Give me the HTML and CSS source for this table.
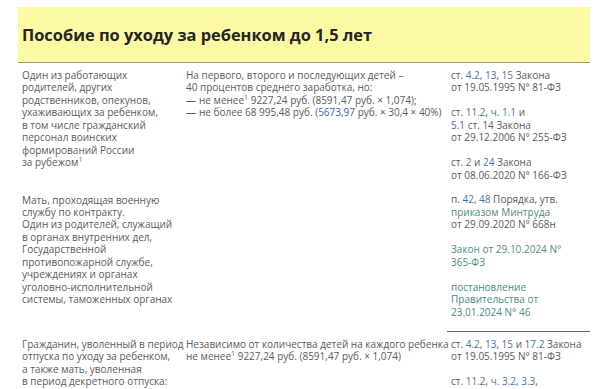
FILE: index.html
```html
<!DOCTYPE html>
<html lang="ru">
<head>
<meta charset="utf-8">
<link rel="stylesheet" href="styles.css">
</head>
<body>
<div class="table">
  <div class="head"><h1 class="title">Пособие по уходу за ребенком до 1,5 лет</h1></div>
  <div class="row row-first">
    <div class="cell c1">
      <p>Один из работающих<br>родителей, других<br>родственников, опекунов,<br>ухаживающих за ребенком,<br>в том числе гражданский<br>персонал воинских<br>формирований России<br>за рубежом<sup class="note">1</sup></p>
      <p class="gap2">Мать, проходящая военную<br>службу по контракту.<br>Один из родителей, служащий<br>в органах внутренних дел,<br>Государственной<br>противопожарной службе,<br>учреждениях и органах<br>уголовно-исполнительной<br>системы, таможенных органах</p>
    </div>
    <div class="cell c2">
      <p>На первого, второго и последующих детей –<br>40 процентов среднего заработка, но:</p>
      <p class="dash"><span class="d">—</span>не менее<sup class="note">1</sup> 9227,24 руб. (8591,47 руб. × 1,074);</p>
      <p class="dash"><span class="d">—</span>не более 68 995,48 руб. (<span class="blue">5673,97</span> руб. × 30,4 × 40%)</p>
    </div>
    <div class="cell c3">
      <p>ст. <span class="lnk">4.2</span>, <span class="lnk">13</span>, <span class="lnk">15</span> Закона<br>от 19.05.1995 N° 81-ФЗ</p>
      <p class="gap">ст. <span class="lnk">11.2</span>, <span class="lnk">ч. 1.1</span> и<br><span class="lnk">5.1</span> ст. 14 Закона<br>от 29.12.2006 N° 255-ФЗ</p>
      <p class="gap">ст. <span class="lnk">2</span> и <span class="lnk">24</span> Закона<br>от 08.06.2020 N° 166-ФЗ</p>
      <p class="gap">п. <span class="lnk">42</span>, <span class="lnk">48</span> Порядка, утв.<br><span class="grn">приказом Минтруда</span><br>от 29.09.2020 N° 668н</p>
      <p class="gap grn">Закон от 29.10.2024 N°<br>365-ФЗ</p>
      <p class="gap grn">постановление<br>Правительства от<br>23.01.2024 N° 46</p>
    </div>
  </div>
  <div class="row row-second">
    <div class="cell c1">
      <p>Гражданин, уволенный в период<br>отпуска по уходу за ребенком,<br>а также мать, уволенная<br>в период декретного отпуска:</p>
    </div>
    <div class="cell c2">
      <p>Независимо от количества детей на каждого ребенка<br>не менее<sup class="note">1</sup> 9227,24 руб. (8591,47 руб. × 1,074)</p>
    </div>
    <div class="cell c3">
      <p>ст. <span class="lnk">4.2</span>, <span class="lnk">13</span>, <span class="lnk">15</span> и <span class="lnk">17.2</span> Закона<br>от 19.05.1995 N° 81-ФЗ</p>
      <p class="gap">ст. <span class="lnk">11.2</span>, <span class="lnk">ч. 3.2</span>, <span class="lnk">3.3</span>,<br><span class="lnk">5.1</span> и <span class="lnk">11.3</span> ст. 14 Закона</p>
    </div>
  </div>
</div>
</body>
</html>
```
FILE: styles.css
```css
html, body {
  margin: 0;
  padding: 0;
  background: #ffffff;
}
body {
  font-family: "Open Sans", "Liberation Sans", sans-serif;
  color: #5a5a5a;
  overflow: hidden;
  height: 389px;
}
.table {
  margin: 7px 0 0 18px;
  width: 572px;
}
.head {
  background: #fcf9a4;
  height: 55px;
  border-bottom: 1px solid #9a9a80;
  display: flex;
  align-items: center;
  padding-left: 4px;
}
.title {
  margin: 0;
  font-size: 16.4px;
  font-weight: 700;
  color: #242424;
}
.row {
  display: grid;
  grid-template-columns: 164px 265px 143px;
}
.cell {
  padding-left: 4px;
  font-size: 10px;
  line-height: 12.45px;
}
.row-first .cell {
  padding-top: 6px;
  padding-bottom: 13px;
}
.row-second .cell {
  padding-top: 6px;
}
.row-first .c3 {
  border-bottom: 1px solid #666;
}
p {
  margin: 0;
  white-space: nowrap;
}
.gap {
  margin-top: 12.45px;
}
.gap2 {
  margin-top: 24.9px;
}
.dash .d {
  display: inline-block;
  width: 13px;
}
.note {
  color: #3f6fae;
  font-size: 7px;
  line-height: 0;
  vertical-align: 4px;
}
.blue {
  color: #3f5ea8;
}
.lnk {
  color: #4b73a0;
}
.grn {
  color: #4a8a86;
}
```
